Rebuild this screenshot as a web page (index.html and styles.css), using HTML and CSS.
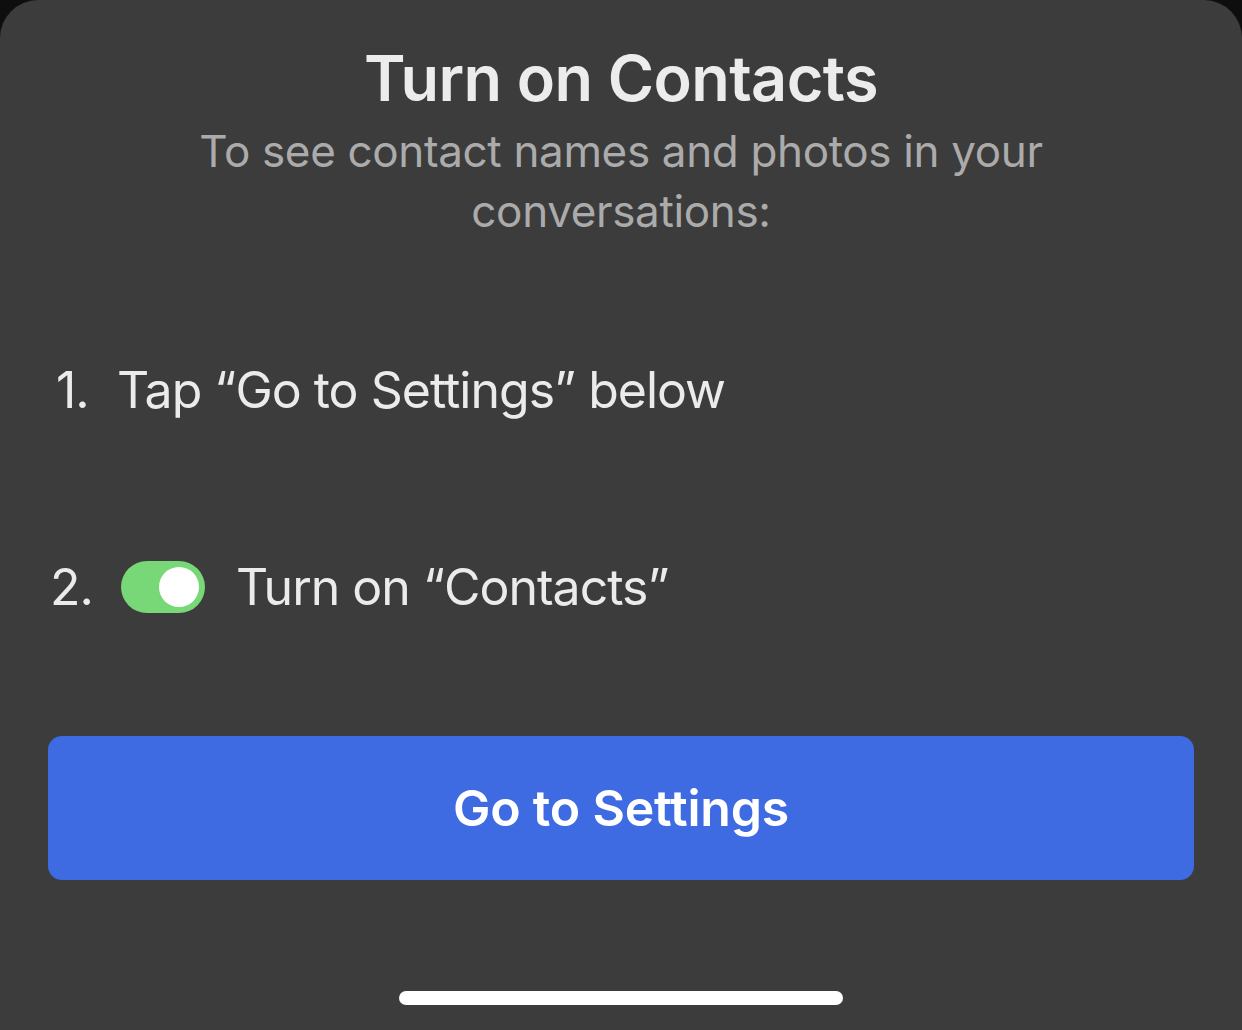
FILE: index.html
```html
<!DOCTYPE html>
<html lang="en">
<head>
    <meta charset="UTF-8">
    <meta name="viewport" content="width=device-width, initial-scale=1.0">
    <title>Turn on Contacts</title>
    <link rel="stylesheet" href="styles.css">
</head>
<body>
    <div class="sheet">
        <div class="header">
            <h1>Turn on Contacts</h1>
            <p class="subtitle">To see contact names and photos in your conversations:</p>
        </div>

        <ol class="steps">
            <li class="step step-one">
                <span class="step-num">1.</span>
                <span class="step-text">Tap “Go to Settings” below</span>
            </li>
            <li class="step step-two">
                <span class="step-num">2.</span>
                <span class="toggle"><span class="knob"></span></span>
                <span class="step-text">Turn on “Contacts”</span>
            </li>
        </ol>

        <button class="settings-btn">Go to Settings</button>

        <div class="home-bar"></div>
    </div>
</body>
</html>
```

FILE: styles.css
```css
/* Dark bottom sheet over the app */
body {
    margin: 0;
    padding: 0;
    background-color: #0e0e0e;
    font-family: 'Inter', 'Liberation Sans', sans-serif;
    color: #ececec;
}

.sheet {
    background-color: #3c3c3c;
    border-radius: 38px 38px 0 0;
    height: 1030px;
    box-sizing: border-box;
    padding: 40px 48px 0;
    display: flex;
    flex-direction: column;
}

.header {
    text-align: center;
}

h1 {
    margin: 0;
    font-size: 63px;
    font-weight: 600;
    line-height: 76px;
    letter-spacing: -0.6px;
    color: #ececec;
}

.subtitle {
    margin: 5px auto 0;
    width: 880px;
    font-size: 44px;
    line-height: 60px;
    color: #ababab;
    letter-spacing: -0.35px;
}

.steps {
    list-style: none;
    margin: 114px 0 0;
    padding: 0;
}

.step {
    display: flex;
    align-items: center;
    font-size: 50px;
    letter-spacing: -1px;
    color: #ebebeb;
    height: 70px;
}

.step-one {
    padding-left: 8px;
}

.step-two {
    margin-top: 127px;
    padding-left: 2px;
}

.step-num {
    width: 61px;
}

.step-two .step-num {
    width: 71px;
}

.toggle {
    width: 84px;
    height: 52px;
    border-radius: 26px;
    background-color: #78d878;
    display: flex;
    align-items: center;
    justify-content: flex-end;
    padding: 0 6px;
    box-sizing: border-box;
    margin-right: 31px;
}

.knob {
    width: 40px;
    height: 40px;
    border-radius: 50%;
    background-color: #fff;
}

.settings-btn {
    margin-top: 114px;
    height: 144px;
    width: 100%;
    border: none;
    border-radius: 14px;
    background-color: #3e6ae2;
    color: #fff;
    font-family: inherit;
    font-size: 50px;
    font-weight: 600;
    letter-spacing: -0.2px;
    cursor: pointer;
}

.home-bar {
    margin: 111px auto 0;
    width: 444px;
    height: 14px;
    border-radius: 7px;
    background-color: #fff;
}
```
